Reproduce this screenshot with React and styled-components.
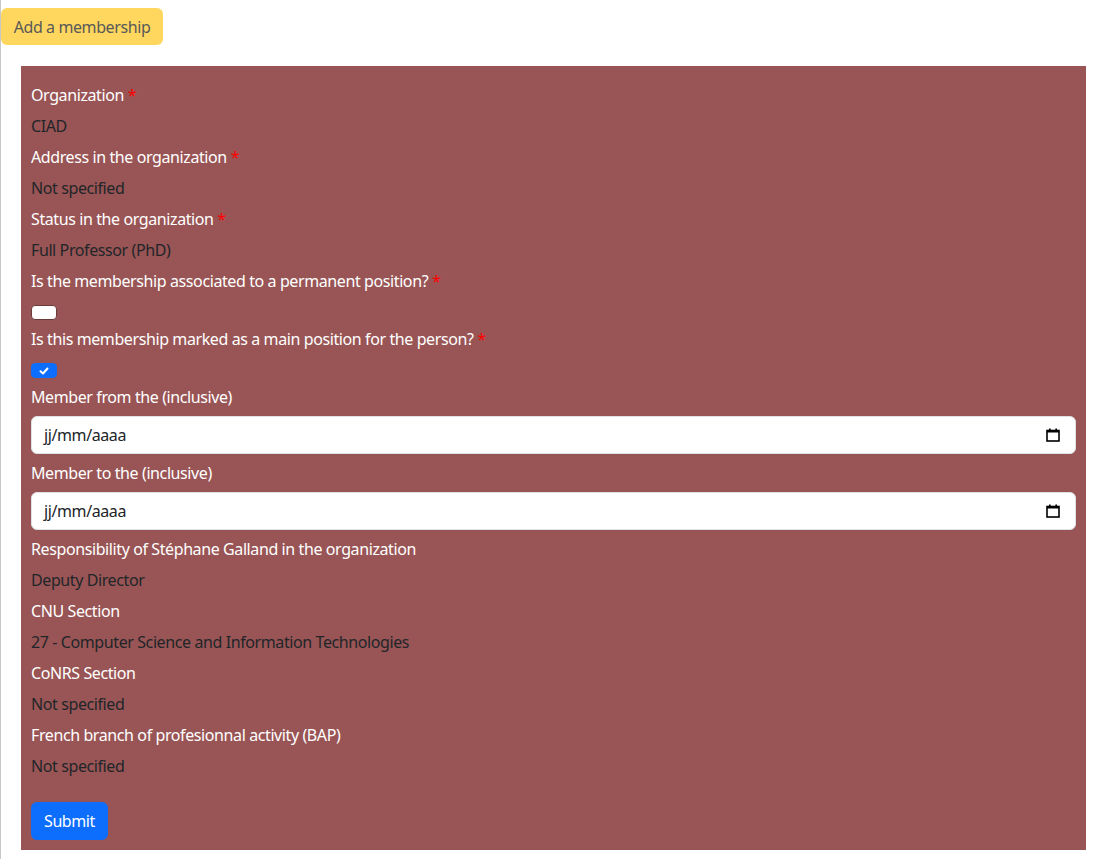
import React from "react";
import styled, { createGlobalStyle } from "styled-components";

const Global = createGlobalStyle`
  html, body { margin: 0; padding: 0; background: #fff; }
  body { font-family: "Noto Sans", "Open Sans", sans-serif; font-size: 16px; line-height: 24px; letter-spacing: -0.4px; color: #212529; }
`;

const Page = styled.div`
  border-left: 1px solid #c8c8c8;
  min-height: 859px;
  box-sizing: border-box;
  padding-top: 8px;
`;

const AddButton = styled.button`
  display: block;
  font: inherit;
  letter-spacing: inherit;
  white-space: nowrap;
  height: 37px;
  width: 162px;
  border: none;
  border-radius: 6px;
  background: #ffd75e;
  color: #595959;
  padding: 0 12px;
  text-align: center;
`;

const Panel = styled.form`
  margin: 21px 14px 0 20px;
  background: #995555;
  padding: 17px 10px 10px 10px;
  display: flex;
  flex-direction: column;
  gap: 7px;
`;

const Label = styled.div`
  color: #fff;
  height: 24px;
`;

const Req = styled.span`
  color: red;
`;

const Value = styled.div`
  color: #212529;
  height: 24px;
`;

const CheckRow = styled.div`
  height: 20px;
  display: flex;
  align-items: flex-end;
`;

const Check = styled.span`
  box-sizing: border-box;
  width: 26px;
  height: 15px;
  border-radius: 4px;
  display: flex;
  align-items: center;
  justify-content: center;
  background: ${(p) => (p.$on ? "#0d6efd" : "#fff")};
  border: 1px solid ${(p) => (p.$on ? "#0d6efd" : "#6b3b3b")};
`;

const DateBox = styled.div`
  box-sizing: border-box;
  height: 38px;
  background: #fff;
  border: 1px solid #dee2e6;
  border-radius: 6px;
  padding: 0 15px 0 12px;
  display: flex;
  align-items: center;
  justify-content: space-between;
  color: #212529;
`;

const SubmitButton = styled.button`
  align-self: flex-start;
  margin-top: 17px;
  font: inherit;
  letter-spacing: inherit;
  height: 38px;
  width: 77px;
  border: none;
  border-radius: 6px;
  background: #0d6efd;
  color: #fff;
  padding: 0 12px;
`;

const CalIcon = () => (
  <svg width="14" height="14" viewBox="0 0 14 14">
    <rect x="1" y="2.5" width="12" height="10.5" fill="none" stroke="#000" strokeWidth="1.6" />
    <rect x="1" y="2" width="12" height="2.5" fill="#000" />
    <rect x="3" y="0.5" width="1.6" height="2.5" fill="#000" />
    <rect x="9.4" y="0.5" width="1.6" height="2.5" fill="#000" />
  </svg>
);

const Tick = () => (
  <svg width="10" height="8" viewBox="0 0 10 8">
    <path d="M1.5 4.2 L4 6.5 L8.5 1.5" fill="none" stroke="#fff" strokeWidth="2" strokeLinecap="round" strokeLinejoin="round" />
  </svg>
);

export default function App() {
  return (
    <>
      <Global />
      <Page>
        <AddButton type="button">Add a membership</AddButton>
        <Panel onSubmit={(e) => e.preventDefault()}>
          <Label>Organization <Req>*</Req></Label>
          <Value>CIAD</Value>
          <Label>Address in the organization <Req>*</Req></Label>
          <Value>Not specified</Value>
          <Label>Status in the organization <Req>*</Req></Label>
          <Value>Full Professor (PhD)</Value>
          <Label>Is the membership associated to a permanent position? <Req>*</Req></Label>
          <CheckRow><Check /></CheckRow>
          <Label>Is this membership marked as a main position for the person? <Req>*</Req></Label>
          <CheckRow><Check $on><Tick /></Check></CheckRow>
          <Label>Member from the (inclusive)</Label>
          <DateBox><span>jj/mm/aaaa</span><CalIcon /></DateBox>
          <Label>Member to the (inclusive)</Label>
          <DateBox><span>jj/mm/aaaa</span><CalIcon /></DateBox>
          <Label>Responsibility of Stéphane Galland in the organization</Label>
          <Value>Deputy Director</Value>
          <Label>CNU Section</Label>
          <Value>27 - Computer Science and Information Technologies</Value>
          <Label>CoNRS Section</Label>
          <Value>Not specified</Value>
          <Label>French branch of profesionnal activity (BAP)</Label>
          <Value>Not specified</Value>
          <SubmitButton type="submit">Submit</SubmitButton>
        </Panel>
      </Page>
    </>
  );
}
